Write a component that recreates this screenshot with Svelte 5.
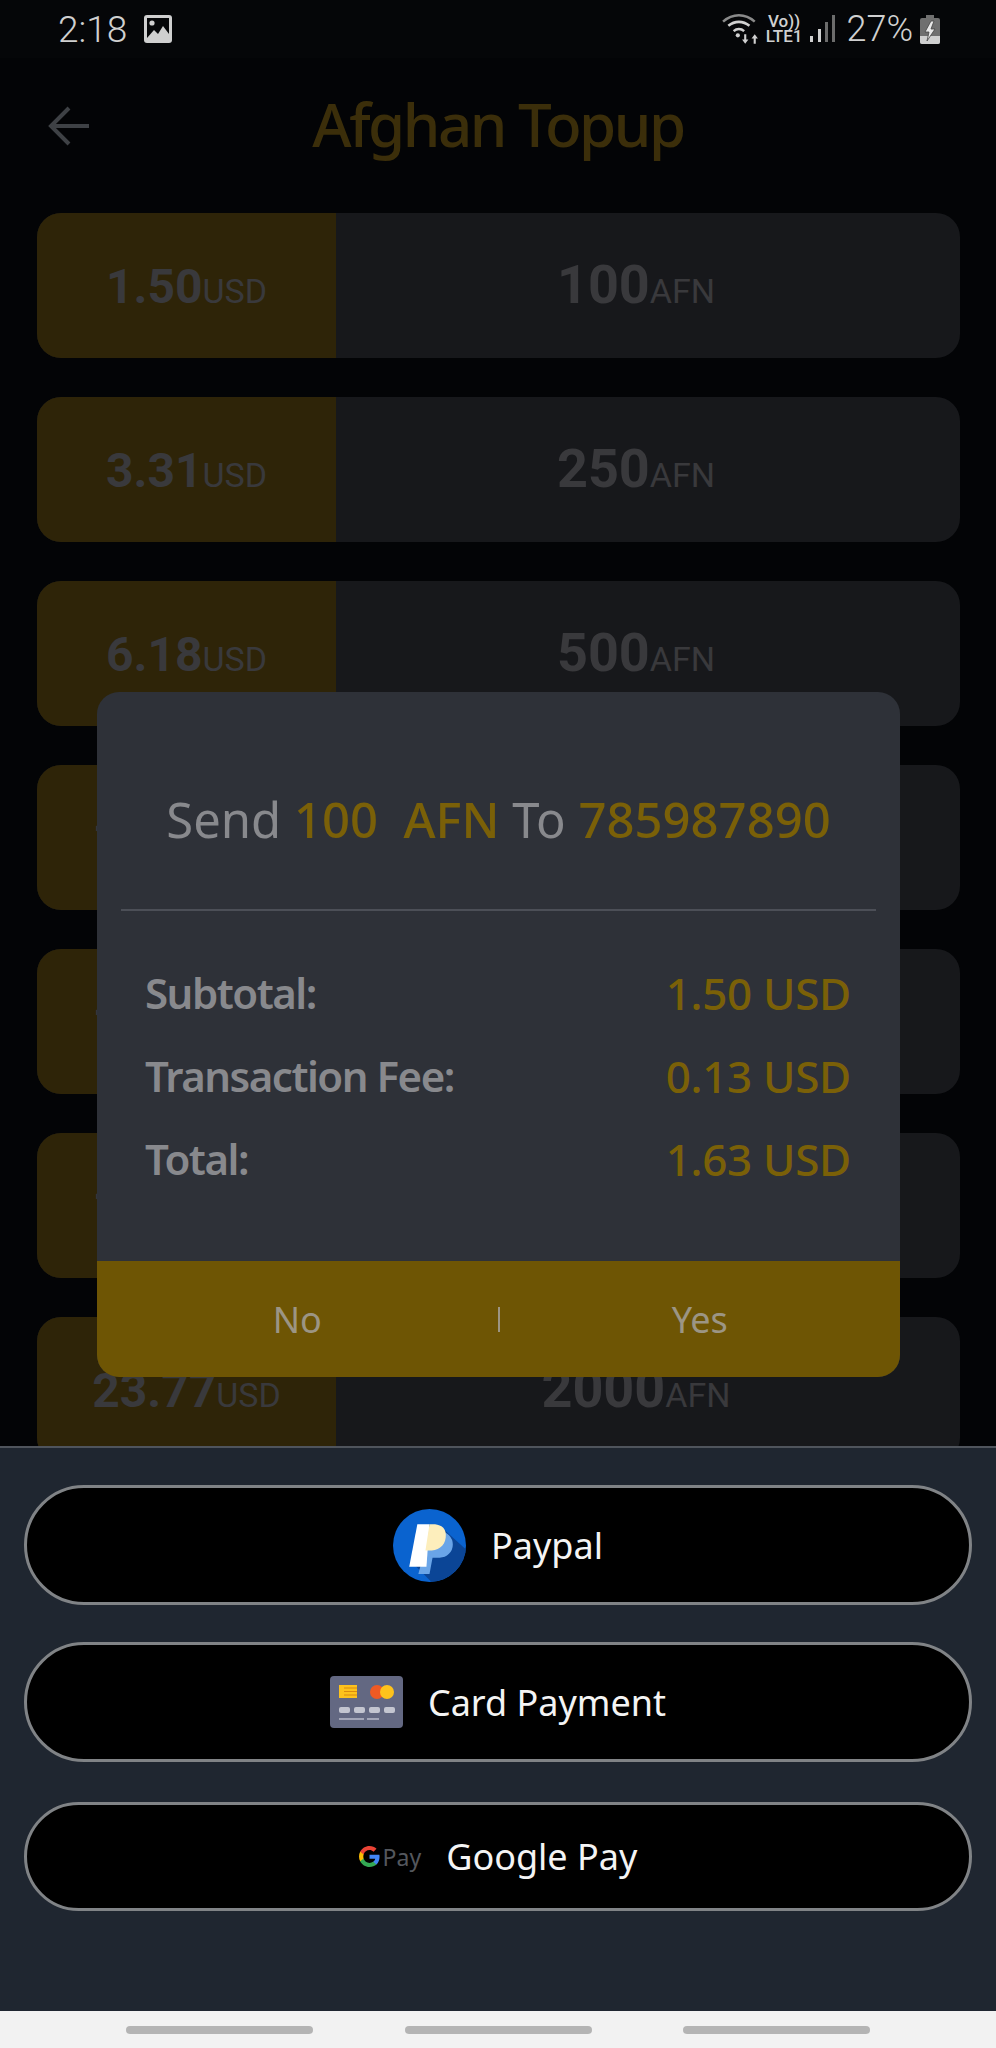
<script>
	const rates = [
		{ usd: '1.50', afn: '100' },
		{ usd: '3.31', afn: '250' },
		{ usd: '6.18', afn: '500' },
		{ usd: '12.02', afn: '1000' },
		{ usd: '17.89', afn: '1500' },
		{ usd: '19.83', afn: '1750' },
		{ usd: '23.77', afn: '2000' }
	];

	const totals = [
		{ label: 'Subtotal:', value: '1.50 USD' },
		{ label: 'Transaction Fee:', value: '0.13 USD' },
		{ label: 'Total:', value: '1.63 USD' }
	];
</script>

<div class="screen">
	<!-- Status bar -->
	<div class="status-bar">
		<div class="status-left">
			<span class="time">2:18</span>
			<svg class="pic-icon" viewBox="0 0 28 28" aria-hidden="true">
				<path fill="#cfcfcf" d="M3 0h22a3 3 0 0 1 3 3v22a3 3 0 0 1-3 3H3a3 3 0 0 1-3-3V3a3 3 0 0 1 3-3z" />
				<path fill="#050608" d="M3 3h22v16l-6-8-5 8-4-4-7 8z" />
				<circle cx="8" cy="8" r="2.6" fill="#cfcfcf" />
			</svg>
		</div>
		<div class="status-right">
			<svg class="wifi-icon" viewBox="0 0 36 30" aria-hidden="true">
				<path d="M1 8c9-8 21-8 30 0" fill="none" stroke="#8a8a8a" stroke-width="2.4" />
				<g fill="none" stroke="#d0d0d0" stroke-width="2.4">
					<path d="M6 12c6-5 14-5 20 0" />
					<path d="M11 17c3-2.500 7-2.500 10 0" />
				</g>
				<circle cx="15" cy="21" r="2" fill="#d0d0d0" />
				<path fill="#d0d0d0" d="M21 20h2v5h2l-3 4-3-4h2zM32 29h-2v-5h-2l3-4 3 4h-2z" />
			</svg>
			<div class="volte">
				<span>Vo))</span>
				<span>LTE1</span>
			</div>
			<svg class="signal-icon" viewBox="0 0 26 28" aria-hidden="true">
				<rect x="1" y="21" width="3" height="6" fill="#d0d0d0" />
				<rect x="9" y="14" width="3" height="13" fill="#d0d0d0" />
				<rect x="16" y="7" width="3" height="20" fill="#6c6c6c" />
				<rect x="23" y="0" width="3" height="27" fill="#6c6c6c" />
			</svg>
			<span class="battery-text">27%</span>
			<svg class="battery-icon" viewBox="0 0 20 29" aria-hidden="true">
				<path fill="#6f6f6f" d="M6 0h8v3h4a2 2 0 0 1 2 2v22a2 2 0 0 1-2 2H2a2 2 0 0 1-2-2V5a2 2 0 0 1 2-2h4z" />
				<path fill="#cfcfcf" d="M0 21h20v6a2 2 0 0 1-2 2H2a2 2 0 0 1-2-2z" />
				<path fill="#e8e8e8" stroke="#444" stroke-width="0.8" d="M11 6l-6 11h4l-2 9 8-12h-4l3-8z" />
			</svg>
		</div>
	</div>

	<!-- Page header -->
	<header class="page-header">
		<svg class="back-icon" viewBox="0 0 42 40" aria-hidden="true">
			<path d="M21 2L3 20l18 18M3 20h38" fill="none" stroke="#3e4145" stroke-width="4" />
		</svg>
		<h1>Afghan Topup</h1>
	</header>

	<!-- Rate list -->
	<div class="rate-list">
		{#each rates as rate}
			<div class="rate-row">
				<div class="rate-usd"><b>{rate.usd}</b><span>USD</span></div>
				<div class="rate-afn"><b>{rate.afn}</b><span>AFN</span></div>
			</div>
		{/each}
	</div>

	<!-- Confirm dialog -->
	<div class="dialog">
		<div class="dialog-title">
			Send <em>100&nbsp; AFN</em> To <em>785987890</em>
		</div>
		<div class="dialog-body">
			{#each totals as line}
				<div class="total-line">
					<span>{line.label}</span>
					<em>{line.value}</em>
				</div>
			{/each}
		</div>
		<div class="dialog-actions">
			<span>No</span>
			<i class="action-sep"></i>
			<span>Yes</span>
		</div>
	</div>

	<!-- Payment sheet -->
	<div class="sheet">
		<button class="pay-button first">
			<svg class="paypal-icon" viewBox="0 0 72 72" aria-hidden="true">
				<defs>
					<clipPath id="pp-clip"><circle cx="36" cy="36" r="36" /></clipPath>
				</defs>
				<circle cx="36" cy="36" r="36" fill="#0a63cf" />
				<path clip-path="url(#pp-clip)" fill="#0b4596" d="M50 20L72 40V72H38L22 56z" />
				<path fill="#6aa5e8" d="M36 22h10a12 12 0 0 1 0 26h-7l-3 16H25z" />
				<path fill="#ffffff" d="M24 15h12l-3 42H16z" />
				<path fill="#fdeebc" d="M36 15h3c10 0 14 5 13 13-1 9-8 13-17 13h-3z" />
			</svg>
			<span>Paypal</span>
		</button>
		<button class="pay-button second">
			<svg class="card-icon" viewBox="0 0 73 52" aria-hidden="true">
				<rect width="73" height="52" rx="4" fill="#636882" />
				<rect x="9" y="9" width="18" height="13" fill="#fdc21c" />
				<path d="M14 12h13M14 15.500h13M14 19h13" stroke="#d98a10" stroke-width="1" />
				<circle cx="47" cy="16" r="7" fill="#ef5a24" />
				<circle cx="57" cy="16" r="7" fill="#fdc21c" />
				<rect x="9" y="31" width="11" height="6" rx="2" fill="#c3c5d0" />
				<rect x="24" y="31" width="11" height="6" rx="2" fill="#c3c5d0" />
				<rect x="39" y="31" width="11" height="6" rx="2" fill="#c3c5d0" />
				<rect x="54" y="31" width="11" height="6" rx="2" fill="#c3c5d0" />
				<rect x="9" y="42" width="25" height="2" fill="#a3a6b8" />
				<rect x="37" y="42" width="12" height="2" fill="#a3a6b8" />
			</svg>
			<span>Card Payment</span>
		</button>
		<button class="pay-button third">
			<span class="gpay-mark">
				<svg class="g-icon" viewBox="0 0 24 24" aria-hidden="true">
					<path fill="#4285f4" d="M23.500 12.300c0-.8-.1-1.600-.2-2.300H12v4.500h6.500c-.3 1.500-1.100 2.700-2.400 3.600v3h3.900c2.300-2.100 3.500-5.200 3.500-8.800z" />
					<path fill="#34a853" d="M12 24c3.200 0 6-1.100 8-2.900l-3.900-3c-1.100.7-2.500 1.200-4.100 1.200-3.100 0-5.800-2.100-6.700-5H1.300v3.100C3.300 21.300 7.300 24 12 24z" />
					<path fill="#fbbc05" d="M5.300 14.300c-.5-1.500-.5-3.100 0-4.600V6.600h-4C-.4 10-.4 14 1.300 17.400z" />
					<path fill="#ea4335" d="M12 4.700c1.800 0 3.300.6 4.600 1.800l3.400-3.400C17.900 1.200 15.200 0 12 0 7.300 0 3.300 2.700 1.300 6.600l4 3.100c.9-2.900 3.600-5 6.700-5z" />
				</svg>
				<span class="gpay-text">Pay</span>
			</span>
			<span>Google Pay</span>
		</button>
	</div>

	<!-- Android nav bar -->
	<div class="nav-bar">
		<i></i>
		<i></i>
		<i></i>
	</div>
</div>

<style>
	:global(body) {
		margin: 0;
		background: #030406;
	}

	.screen {
		position: relative;
		width: 996px;
		height: 2048px;
		overflow: hidden;
		background: #030406;
		font-family: 'Noto Sans', sans-serif;
	}

	.status-bar {
		display: flex;
		justify-content: space-between;
		align-items: center;
		height: 58px;
		padding: 0 56px 0 58px;
		background: #050608;
		color: #d0d0d0;
		font-family: Roboto, sans-serif;
	}

	.status-left,
	.status-right {
		display: flex;
		align-items: center;
	}

	.time {
		font-size: 37px;
		font-weight: 300;
	}

	.pic-icon {
		width: 28px;
		height: 28px;
		margin-left: 17px;
	}

	.wifi-icon {
		width: 38px;
		height: 32px;
	}

	.volte {
		display: flex;
		flex-direction: column;
		align-items: center;
		margin-left: 6px;
		font-size: 17px;
		line-height: 15px;
		font-weight: 500;
	}

	.signal-icon {
		width: 26px;
		height: 28px;
		margin-left: 7px;
	}

	.battery-text {
		margin-left: 11px;
		font-size: 36px;
		font-weight: 300;
	}

	.battery-icon {
		width: 20px;
		height: 29px;
		margin-left: 7px;
	}

	.page-header {
		position: relative;
		display: flex;
		justify-content: center;
		align-items: center;
		height: 132px;
	}

	.back-icon {
		position: absolute;
		left: 48px;
		top: 48px;
		width: 42px;
		height: 40px;
	}

	h1 {
		margin: 0;
		font-size: 60px;
		font-weight: 500;
		letter-spacing: -2.5px;
		color: #3b2e0a;
	}

	.rate-list {
		display: flex;
		flex-direction: column;
		gap: 39px;
		padding: 23px 36px 0 37px;
	}

	.rate-row {
		display: flex;
		height: 145px;
		border-radius: 24px;
		overflow: hidden;
		background: #17181b;
		font-family: Roboto, sans-serif;
		color: #39393c;
	}

	.rate-usd {
		display: flex;
		justify-content: center;
		align-items: baseline;
		width: 299px;
		padding-top: 45px;
		box-sizing: border-box;
		background: #2e2408;
	}

	.rate-afn {
		display: flex;
		flex: 1;
		justify-content: center;
		align-items: baseline;
		padding-top: 40px;
		padding-right: 24px;
	}

	.rate-usd b {
		font-size: 48px;
		font-weight: 700;
	}

	.rate-afn b {
		font-size: 54px;
		font-weight: 700;
	}

	.rate-row span {
		font-size: 34px;
		font-weight: 400;
	}

	.dialog {
		position: absolute;
		left: 97px;
		top: 692px;
		display: flex;
		flex-direction: column;
		width: 803px;
		height: 685px;
		border-radius: 22px;
		overflow: hidden;
		background: #2e3138;
	}

	.dialog em {
		font-style: normal;
		color: #7a6008;
	}

	.dialog-title {
		height: 219px;
		margin: 0 24px;
		box-sizing: border-box;
		padding-top: 97px;
		border-bottom: 2px solid #4c4f57;
		font-size: 49px;
		line-height: 60px;
		text-align: center;
		color: #88898d;
		white-space: nowrap;
	}

	.dialog-title em {
		font-weight: 500;
	}

	.dialog-body {
		display: flex;
		flex-direction: column;
		flex: 1;
		gap: 23px;
		padding: 52px 49px 0 48px;
	}

	.total-line {
		display: flex;
		justify-content: space-between;
		font-size: 42px;
		line-height: 60px;
		font-weight: 600;
		letter-spacing: -1.5px;
		color: #88898d;
	}

	.total-line em {
		font-size: 44px;
		font-weight: 500;
		letter-spacing: -0.3px;
	}

	.dialog-actions {
		display: flex;
		align-items: center;
		height: 116px;
		background: #6e5504;
		font-size: 36px;
		color: #9c9584;
	}

	.dialog-actions span {
		flex: 1;
		text-align: center;
	}

	.action-sep {
		width: 2px;
		height: 25px;
		background: #9c9584;
	}

	.sheet {
		position: absolute;
		left: 0;
		right: 0;
		top: 1446px;
		height: 565px;
		box-sizing: border-box;
		padding: 37px 24px 0;
		border-top: 2px solid #4f545c;
		background: #1f2630;
		display: flex;
		flex-direction: column;
	}

	.pay-button {
		display: flex;
		justify-content: center;
		align-items: center;
		gap: 25px;
		width: 948px;
		height: 120px;
		padding: 0;
		border: 3px solid #808386;
		border-radius: 60px;
		background: #000;
		font-family: 'Noto Sans', sans-serif;
		font-size: 36px;
		color: #f4f4f4;
	}

	.second {
		margin-top: 37px;
	}

	.third {
		margin-top: 40px;
		height: 109px;
		border-radius: 55px;
	}

	.paypal-icon {
		width: 73px;
		height: 73px;
	}

	.card-icon {
		width: 73px;
		height: 52px;
	}

	.gpay-mark {
		display: flex;
		align-items: center;
		gap: 3px;
	}

	.g-icon {
		width: 21px;
		height: 21px;
	}

	.gpay-text {
		font-size: 23px;
		color: #54575d;
	}

	.nav-bar {
		position: absolute;
		left: 0;
		right: 0;
		bottom: 0;
		display: flex;
		justify-content: space-between;
		align-items: center;
		height: 37px;
		padding: 0 126px;
		box-sizing: border-box;
		background: #f2f2f2;
	}

	.nav-bar i {
		width: 187px;
		height: 8px;
		border-radius: 4px;
		background: #b4b4b4;
	}
</style>
